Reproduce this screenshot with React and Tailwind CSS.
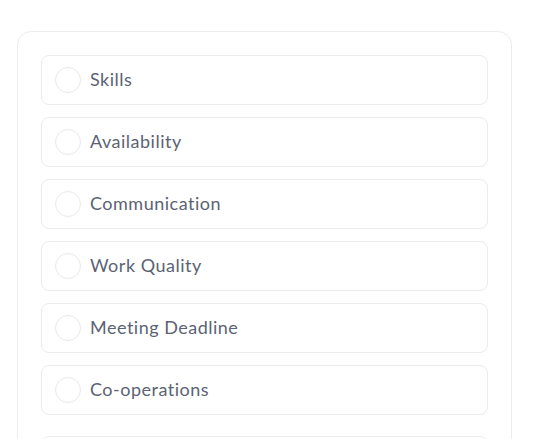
import React from 'react'

const items = ['Skills', 'Availability', 'Communication', 'Work Quality', 'Meeting Deadline', 'Co-operations']

const App = () => {
  return (
    <div className="min-h-screen bg-white pt-[31px] pl-[17px]" style={{ fontFamily: 'Lato, "Open Sans", sans-serif' }}>
      <div className="w-[495px] border border-[#ececf1] rounded-[14px] px-[23px] pt-[23px] pb-6">
        <div className="flex flex-col gap-[12px]">
          {items.map((label) => (
            <div key={label} className="h-[50px] border border-[#ebebf0] rounded-lg flex items-center pl-[13px] gap-[9px]">
              <div className="w-[26px] h-[26px] rounded-full border border-[#e8e8ed] shrink-0" />
              <p className="text-[18px] text-[#5b6374] leading-none tracking-[0.5px] -mt-[3px]">{label}</p>
            </div>
          ))}
        </div>
        <div className="mt-[21px] h-[100px] border border-[#ebebf0] rounded-lg" />
      </div>
    </div>
  )
}

export default App
